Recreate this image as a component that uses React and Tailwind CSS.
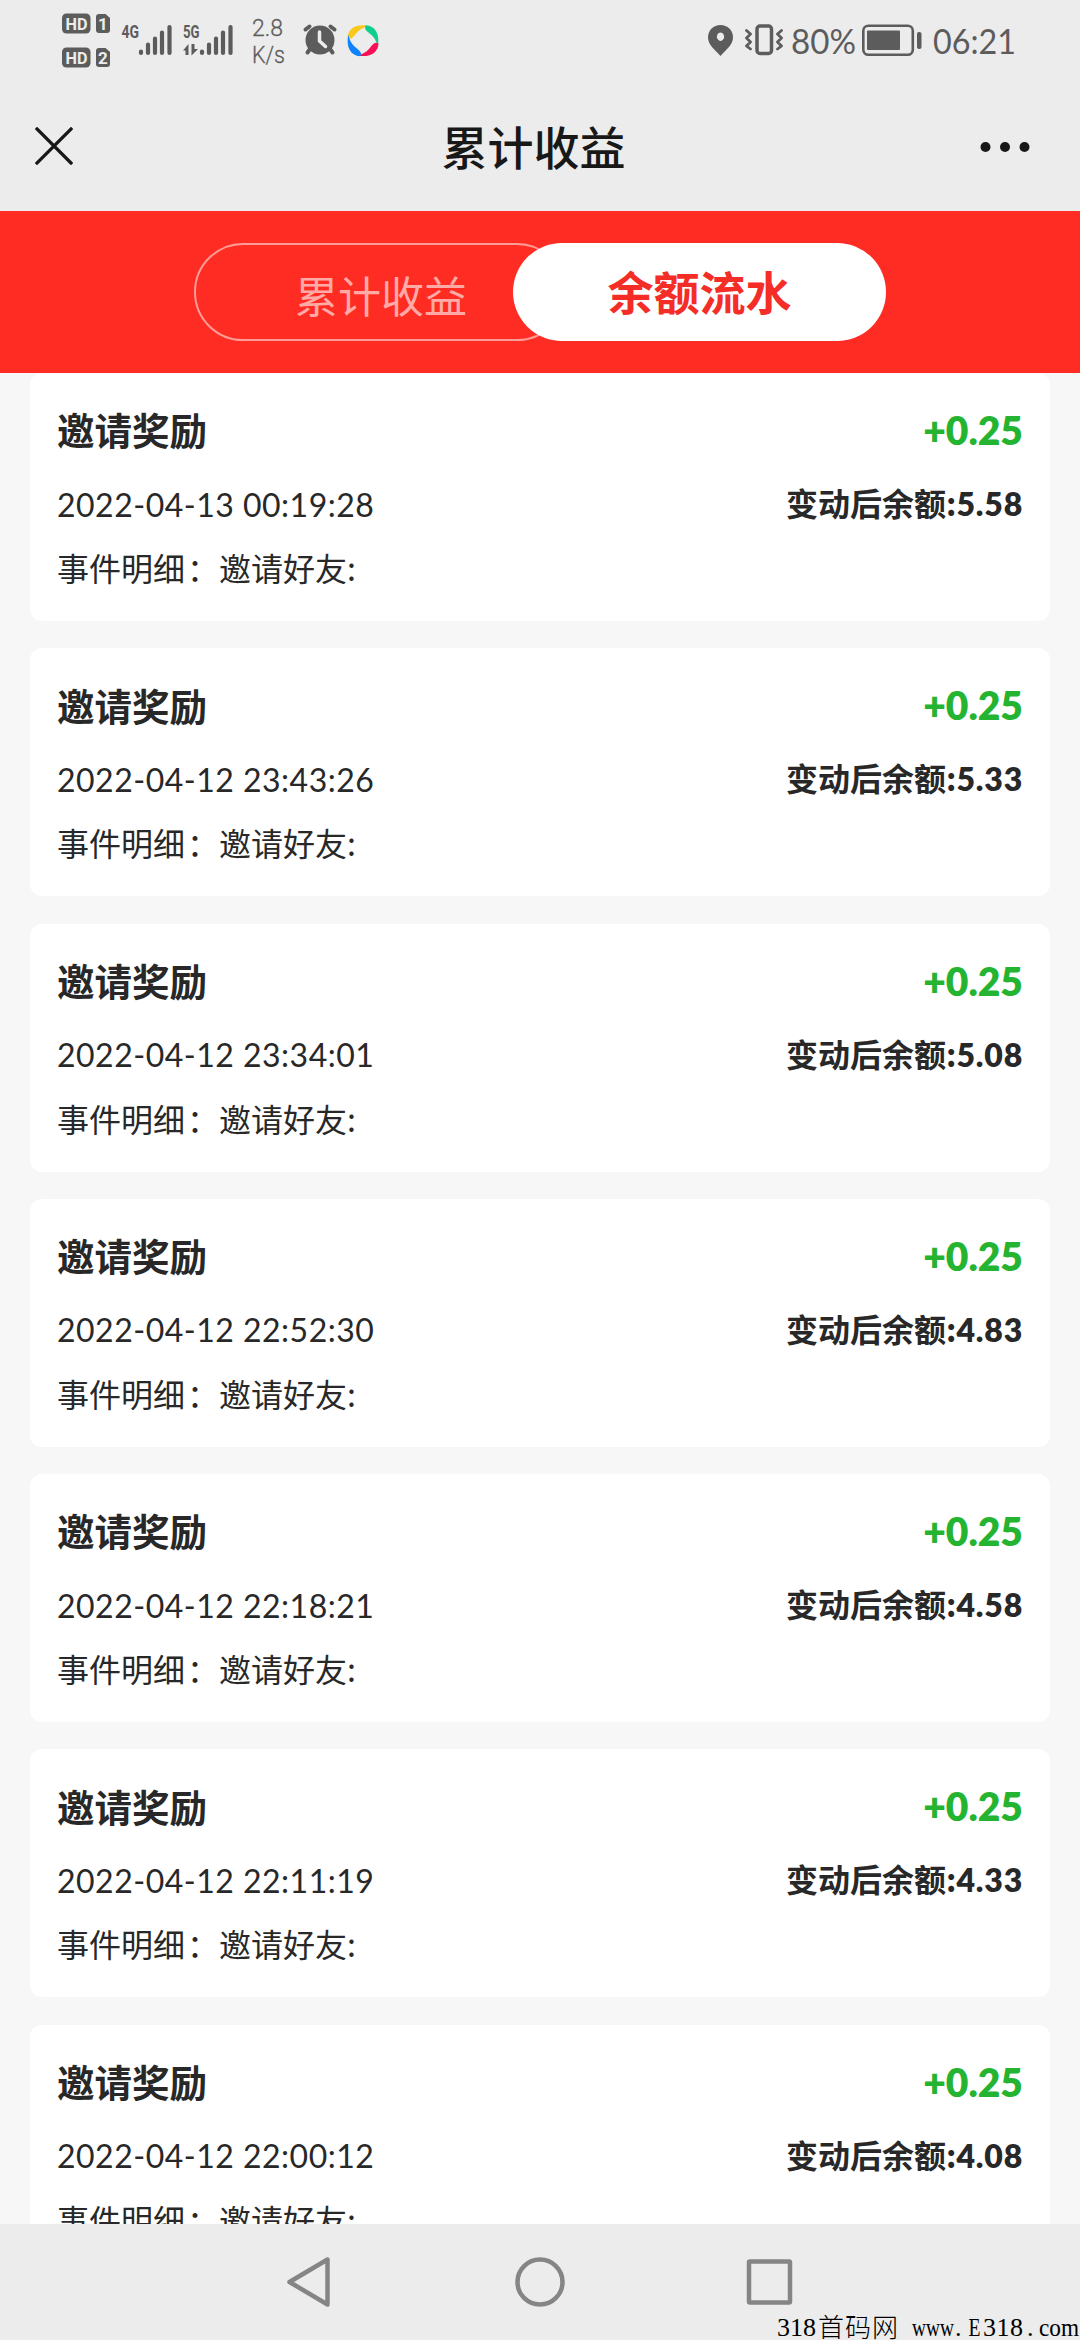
const records = [
  ["2022-04-13 00:19:28", "5.58"],
  ["2022-04-12 23:43:26", "5.33"],
  ["2022-04-12 23:34:01", "5.08"],
  ["2022-04-12 22:52:30", "4.83"],
  ["2022-04-12 22:18:21", "4.58"],
  ["2022-04-12 22:11:19", "4.33"],
  ["2022-04-12 22:00:12", "4.08"],
];

const petal = "M347.500 38C348 28 357 23.500 369 26C363.500 27 360 29.500 357 32.500C354 36 351.500 40.500 347.500 38Z";

function LeftStatus() {
  return (
    <svg width="400" height="90" viewBox="0 0 400 90" className="shrink-0 font-['Roboto',sans-serif]" fill="#5c5c5c" stroke="none">
      <rect x="62" y="13.500" width="28.500" height="20" rx="4.500" />
      <path d="M99 14h6.500l4.500 4v12q0 3-3 3h-8q-3 0-3-3V17q0-3 3-3Z" />
      <rect x="62" y="47.500" width="28.500" height="20" rx="4.500" />
      <path d="M99 48h6.500l4.500 4v12q0 3-3 3h-8q-3 0-3-3V51q0-3 3-3Z" />
      <g fill="#ececec" fontWeight="700" fontSize="17">
        <text x="65.500" y="30" textLength="22" lengthAdjust="spacingAndGlyphs">HD</text>
        <text x="98" y="30">1</text>
        <text x="65.500" y="64" textLength="22" lengthAdjust="spacingAndGlyphs">HD</text>
        <text x="98" y="64">2</text>
      </g>
      <g fontWeight="700" fontSize="18">
        <text x="121.500" y="38" textLength="17.500" lengthAdjust="spacingAndGlyphs">4G</text>
        <text x="183" y="38" textLength="16.500" lengthAdjust="spacingAndGlyphs">5G</text>
      </g>
      <g stroke="#5c5c5c" strokeWidth="4.200" strokeLinecap="round">
        <path d="M141 51.500v1.500M148 44.500v8.500M155 38.500v14.500M162 32.500v20.500M169.500 27v26" />
        <path d="M202 51.500v1.500M209 44.500v8.500M216 38.500v14.500M223 32.500v20.500M230.500 27v26" />
      </g>
      <path d="M183 50.500L188.500 44v11h-3v-4.500ZM191.500 44h3v5h3.500L191.500 55.500Z" />
      <g fontSize="24" fontWeight="300" stroke="#5c5c5c" strokeWidth="0.300">
        <text x="252" y="36" textLength="31" lengthAdjust="spacingAndGlyphs">2.8</text>
        <text x="252" y="63" textLength="33" lengthAdjust="spacingAndGlyphs">K/s</text>
      </g>
      <circle cx="320" cy="40" r="14.500" />
      <path d="M305.500 29.500l4-3M334.500 29.500l-4-3M310 49l-2.500 3.500M330 49l2.500 3.500" stroke="#5c5c5c" strokeWidth="4" strokeLinecap="round" />
      <path d="M319.500 32v9l6 5.500" stroke="#ececec" strokeWidth="3.500" fill="none" strokeLinecap="round" />
      <path d={petal} fill="#fbc91b" />
      <path d={petal} fill="#0fcf8d" transform="rotate(90 363 40.700)" />
      <path d={petal} fill="#f80f55" transform="rotate(180 363 40.700)" />
      <path d={petal} fill="#0d84fa" transform="rotate(270 363 40.700)" />
    </svg>
  );
}

function RightStatus() {
  return (
    <svg width="380" height="90" viewBox="700 0 380 90" className="shrink-0 font-['Lato',sans-serif]" fill="#5c5c5c">
      <path fillRule="evenodd" d="M720.500 25c7 0 12.500 5.300 12.500 12.300c0 7.500-6.500 12-12.500 18.700c-6-6.700-12.500-11.200-12.500-18.700c0-7 5.500-12.300 12.500-12.300Zm0 7.500a3.600 4.200 0 1 0 .01 0Z" />
      <rect x="757" y="26" width="14.500" height="27.500" rx="3" fill="none" stroke="#5c5c5c" strokeWidth="3.500" />
      <path d="M746.500 30.500l4 3.500l-4 4l4 4l-4 4l4 3M781.500 30.500l-4 3.500l4 4l-4 4l4 4l-4 3" fill="none" stroke="#5c5c5c" strokeWidth="2.800" strokeLinejoin="round" strokeLinecap="round" />
      <g fontSize="34">
        <text x="791" y="54" textLength="65" lengthAdjust="spacingAndGlyphs">80%</text>
        <text x="933" y="54" textLength="83" lengthAdjust="spacingAndGlyphs">06:21</text>
      </g>
      <rect x="863.300" y="25.800" width="49.500" height="29" rx="5" fill="none" stroke="#5c5c5c" strokeWidth="2.600" />
      <rect x="867" y="30.500" width="33" height="19.500" rx="1" />
      <rect x="917" y="32" width="4.500" height="17" rx="2" />
    </svg>
  );
}

function Header() {
  return (
    <header className="flex h-[121px] items-center justify-between pr-[50px] pb-2 pl-[35px]">
      <svg width="38" height="38" viewBox="0 0 38 38" className="mt-[-2px]">
        <path d="M2 2L36 36M36 2L2 36" stroke="#181818" strokeWidth="3.200" strokeLinecap="square" />
      </svg>
      <h1 className="mt-[-4px] ml-[14px] text-[46px] leading-none font-medium text-[#181818]">累计收益</h1>
      <svg width="50" height="12" viewBox="0 0 50 12">
        <circle cx="5.500" cy="6" r="5" fill="#181818" />
        <circle cx="25" cy="6" r="5" fill="#181818" />
        <circle cx="44.500" cy="6" r="5" fill="#181818" />
      </svg>
    </header>
  );
}

function Record({ time, balance }) {
  return (
    <article className="h-[248px] shrink-0 rounded-xl bg-white px-[27px] pt-[29px] text-[#282828]">
      <div className="flex h-[54px] items-center justify-between">
        <h2 className="text-[37.500px] leading-none font-bold">邀请奖励</h2>
        <span className="pt-[3px] font-['Lato',sans-serif] text-[39px] leading-none font-extrabold text-[#25b431]">+0.25</span>
      </div>
      <div className="mt-[19px] flex h-[56px] items-center justify-between">
        <time className="pt-[3px] font-['Lato',sans-serif] text-[32px] leading-none tracking-[0.5px]">{time}</time>
        <span className="flex items-baseline text-[32px] leading-none font-bold">
          变动后余额:
          <b className="font-['Lato',sans-serif] font-extrabold tracking-[0.8px]">{balance}</b>
        </span>
      </div>
      <p className="mt-[10px] h-[52px] text-[32px] leading-[52px]">
        事件明细<span className="ml-[2px]">：</span>邀请好友:
      </p>
    </article>
  );
}

function Watermark() {
  return (
    <svg width="304" height="30" viewBox="776 2310 304 30" className="absolute right-0 bottom-0 font-['Liberation_Serif','Noto_Sans_CJK_SC',serif]" fill="#000" fontSize="26">
      <text x="777" y="2336" textLength="39">318</text>
      <text x="818" y="2337" textLength="80" fontWeight="300" className="font-['Noto_Sans_CJK_SC',sans-serif]">首码网</text>
      <text x="912" y="2336" textLength="42" lengthAdjust="spacingAndGlyphs">www</text>
      <text x="955" y="2336">.</text>
      <text x="968.500" y="2336" textLength="12" lengthAdjust="spacingAndGlyphs">E</text>
      <text x="983" y="2336" textLength="40">318</text>
      <text x="1027" y="2336">.</text>
      <text x="1039" y="2336" textLength="40" lengthAdjust="spacingAndGlyphs">com</text>
    </svg>
  );
}

export default function App() {
  return (
    <div className="flex h-[2340px] w-[1080px] flex-col overflow-hidden bg-[#ececec] font-['Noto_Sans_CJK_SC',sans-serif]">
      <div className="flex h-[90px] w-[1080px] justify-between">
        <LeftStatus />
        <RightStatus />
      </div>
      <Header />
      <nav className="flex h-[162px] justify-center bg-[#ff2c23] pt-8">
        <button className="h-[98px] w-[372px] rounded-full border-2 border-[#ff9c98] pt-1 pl-[2px] text-[43px] text-[#ffaaa6]">累计收益</button>
        <button className="ml-[-53px] h-[98px] w-[373px] rounded-full bg-white pb-1 text-[46px] font-bold text-[#f52d27]">余额流水</button>
      </nav>
      <main className="flex h-[1851px] flex-col gap-[27.300px] overflow-hidden bg-[#f7f7f7] px-[30px]">
        {records.map(([time, balance]) => <Record key={time} time={time} balance={balance} />)}
      </main>
      <footer className="relative flex h-[116px] justify-center">
        <svg width="520" height="60" viewBox="280 2250 520 60" className="mt-[26px]" fill="none" stroke="#858585" strokeWidth="4.500" strokeLinejoin="round">
          <path d="M327.500 2259.500L289.500 2282L327.500 2304.500Z" />
          <circle cx="540" cy="2282" r="22.500" />
          <rect x="749" y="2261.500" width="41" height="41" rx="1" />
        </svg>
        <Watermark />
      </footer>
    </div>
  );
}
